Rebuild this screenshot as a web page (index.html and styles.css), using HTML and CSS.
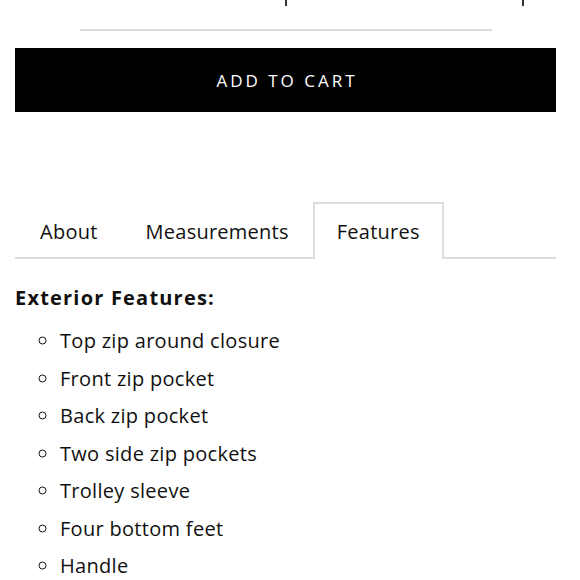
FILE: index.html
```html
<!DOCTYPE html>
<html>
<head>
<meta charset="utf-8">
<link rel="stylesheet" href="styles.css">
</head>
<body>
<div class="qty-edge"></div>
<div class="divider"></div>
<button class="cart-btn">ADD TO CART</button>
<div class="tabs">
  <div class="tab">About</div>
  <div class="tab">Measurements</div>
  <div class="tab active">Features</div>
</div>
<div class="panel">
  <h3 class="panel-title">Exterior Features:</h3>
  <ul class="features">
    <li>Top zip around closure</li>
    <li>Front zip pocket</li>
    <li>Back zip pocket</li>
    <li>Two side zip pockets</li>
    <li>Trolley sleeve</li>
    <li>Four bottom feet</li>
    <li>Handle</li>
  </ul>
</div>
</body>
</html>
```
FILE: styles.css
```css
html, body {
  margin: 0;
  padding: 0;
  background: #fff;
}
body {
  font-family: "Open Sans", "Lato", sans-serif;
  color: #111;
  width: 580px;
}
.qty-edge {
  margin-left: 285px;
  width: 235px;
  height: 6px;
  border-left: 2px solid #333;
  border-right: 2px solid #333;
}
.divider {
  margin: 23px 0 0 80px;
  width: 412px;
  height: 2px;
  background: #ddd;
}
.cart-btn {
  display: block;
  margin: 17px 0 0 15px;
  width: 541px;
  height: 64px;
  background: #000;
  color: #fff;
  border: none;
  font-family: "Open Sans", "Lato", sans-serif;
  font-size: 17px;
  letter-spacing: 3px;
  padding: 0 0 0 3px;
}
.tabs {
  display: flex;
  margin: 90px 24px 0 15px;
  border-bottom: 2px solid #ddd;
}
.tab {
  font-size: 20px;
  line-height: 24px;
  letter-spacing: 0.25px;
  padding: 16px 22px 13px;
  border: 2px solid transparent;
  border-bottom: none;
  margin-bottom: -2px;
}
.tab:first-child {
  padding-left: 23px;
}
.tab.active {
  border-color: #ddd;
  background: #fff;
  padding-bottom: 15px;
}
.panel {
  padding: 0 15px;
}
.panel-title {
  margin: 27px 0 0;
  font-size: 20px;
  line-height: 24px;
  font-weight: 700;
  letter-spacing: 1.2px;
}
.features {
  margin: 12px 0 0;
  padding: 0 0 0 45px;
  list-style: circle;
}
.features li {
  font-size: 20px;
  line-height: 37.5px;
  letter-spacing: 0.3px;
}
```
